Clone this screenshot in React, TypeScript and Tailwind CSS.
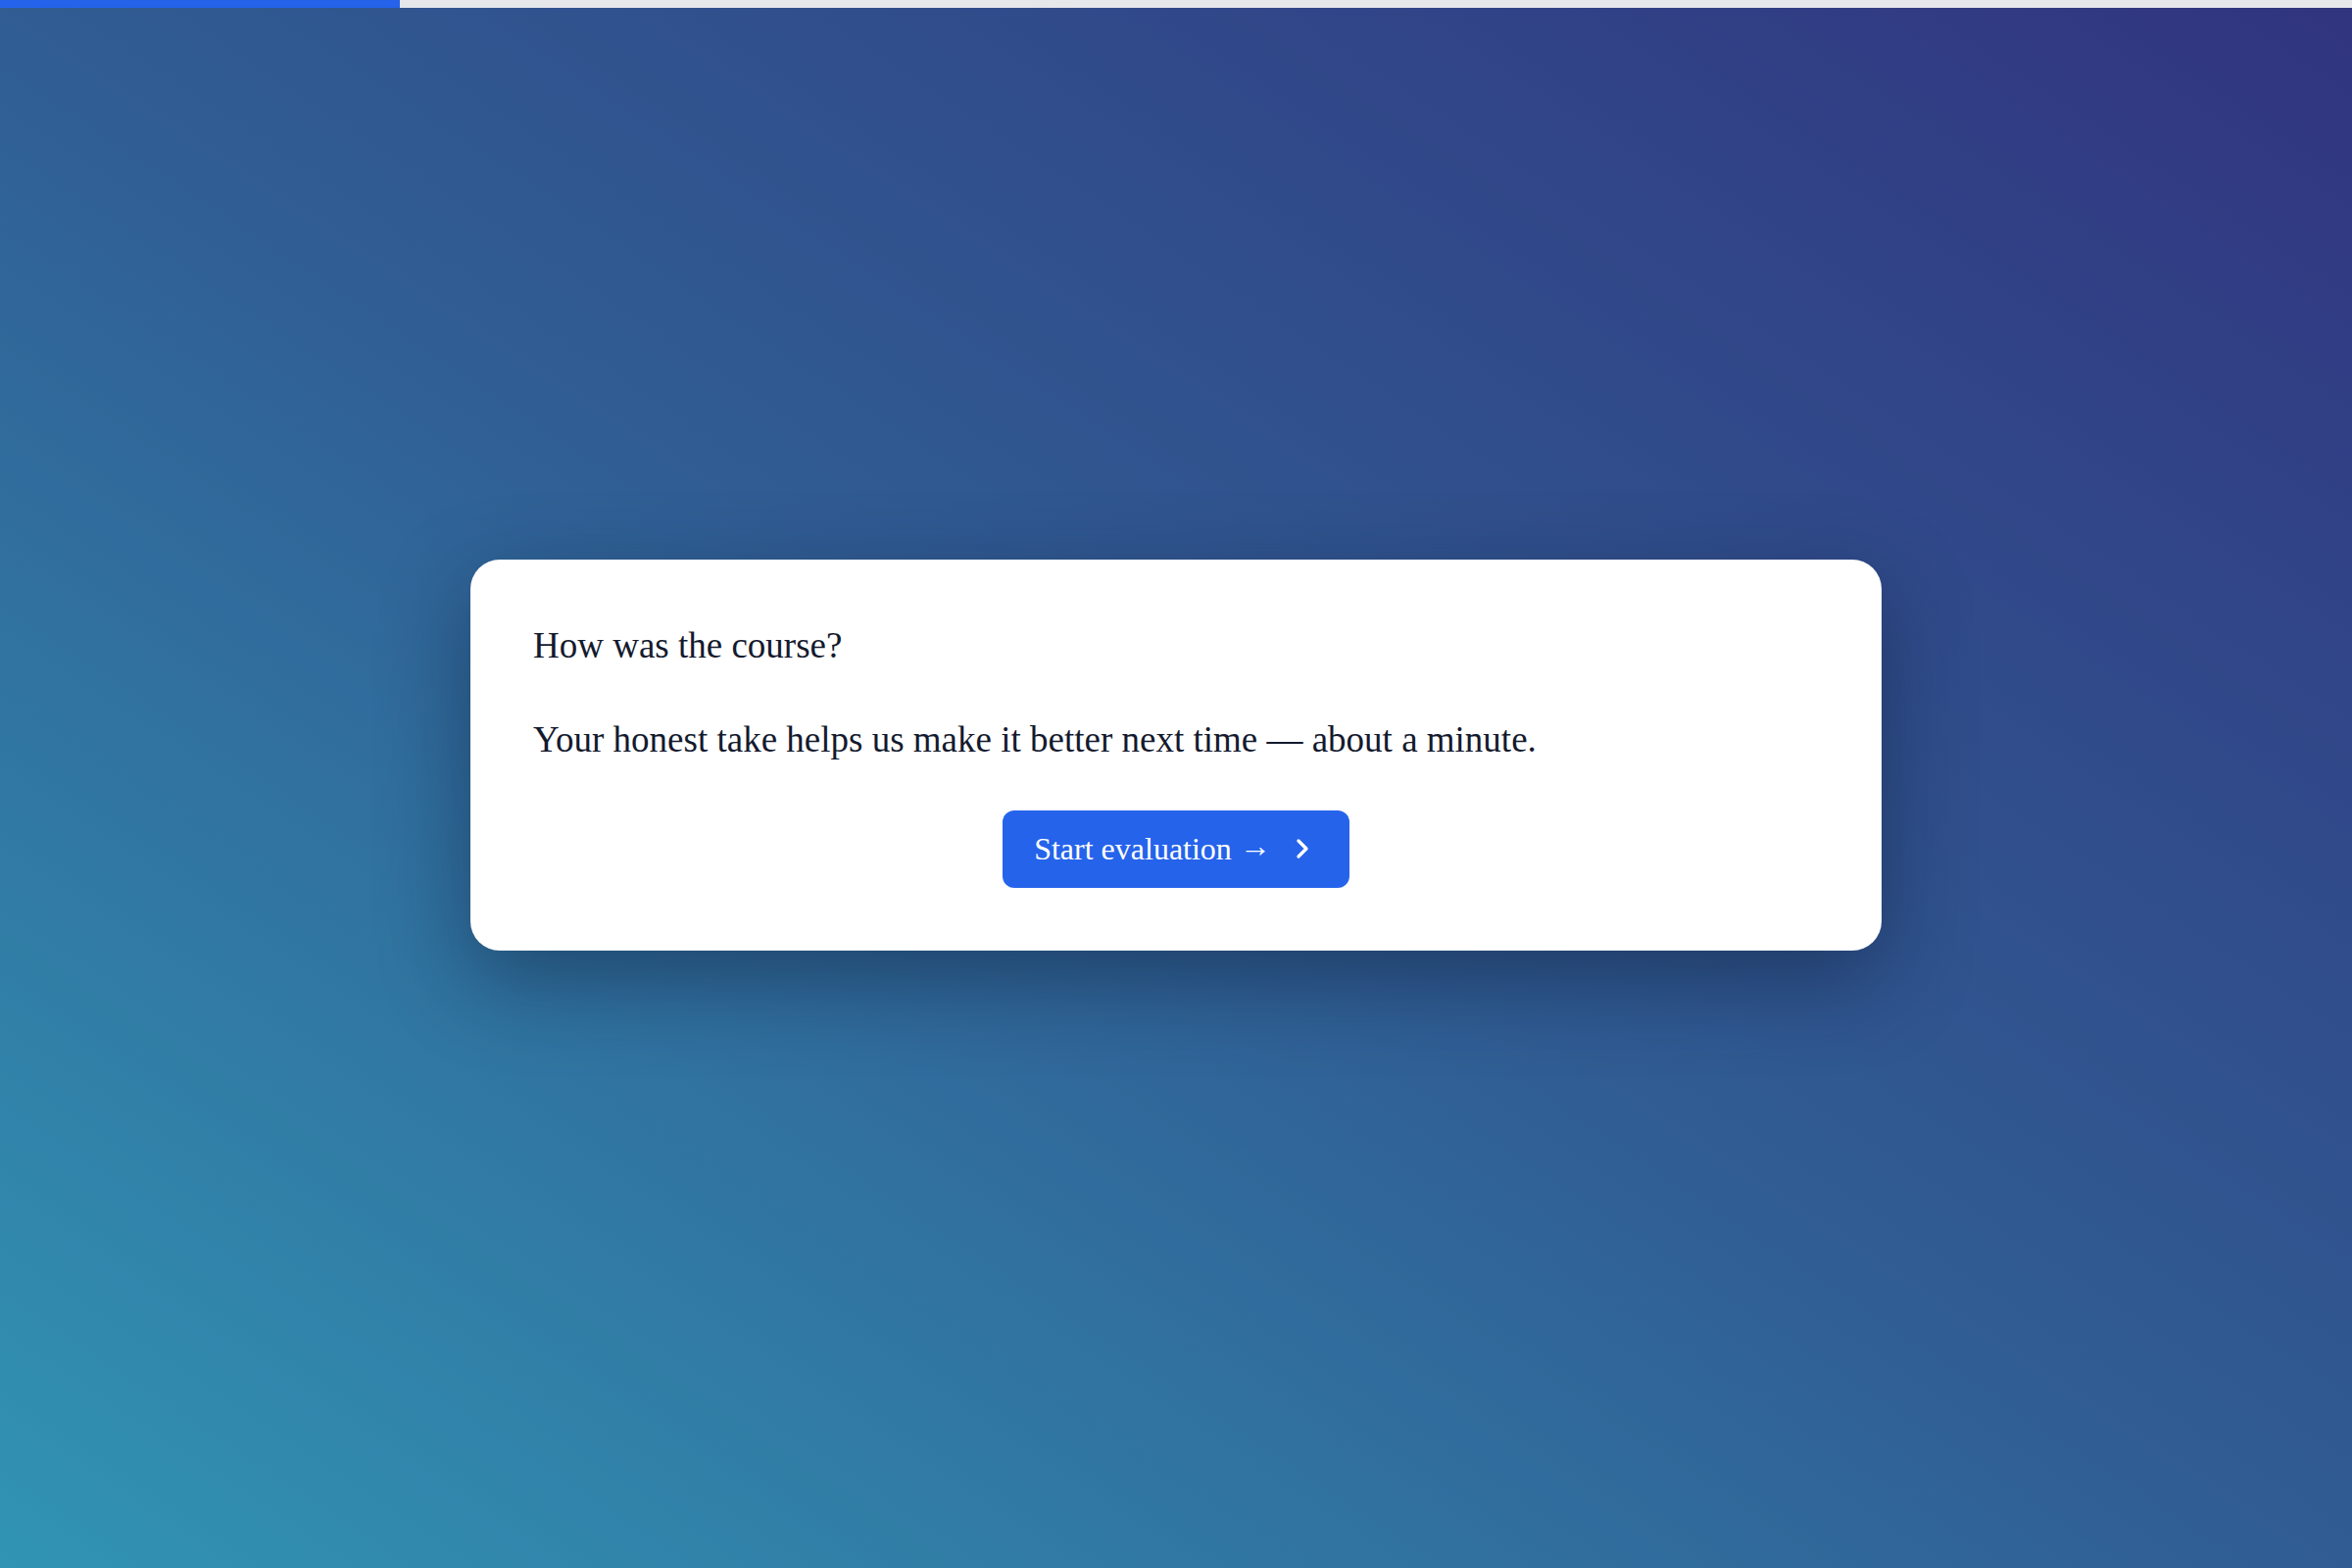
import { ChevronRight } from 'lucide-react'

const serif = { fontFamily: '"Liberation Serif", "DejaVu Serif", serif' }

export default function App() {
  return (
    <div
      className="min-h-screen w-full flex flex-col bg-[linear-gradient(to_top_right,#3194b4,#305c93_50%,#31347f)]"
      style={serif}
    >
      {/* progress */}
      <div className="h-2 w-full bg-[#e5e7eb]">
        <div className="h-full w-[17%] bg-[#2563eb]" />
      </div>

      <main className="flex-1 flex items-center justify-center pb-[68px]">
        <div className="w-[1440px] rounded-[30px] bg-white p-16 shadow-[0_30px_90px_rgba(10,25,50,0.45)]">
          <p className="text-[37px] leading-[48px] text-[#141a2e]">How was the course?</p>
          <p className="mt-12 text-[37px] leading-[48px] text-[#141a2e]">
            Your honest take helps us make it better next time — about a minute.
          </p>
          <div className="mt-12 flex justify-center">
            <button className="flex items-center gap-4 rounded-xl bg-[#2563eb] px-8 py-[17px] text-[32px] leading-[45px] text-white">
              <span>
                Start evaluation <span className="relative -top-[3px]">→</span>
              </span>
              <ChevronRight size={32} strokeWidth={2.5} />
            </button>
          </div>
        </div>
      </main>
    </div>
  )
}
